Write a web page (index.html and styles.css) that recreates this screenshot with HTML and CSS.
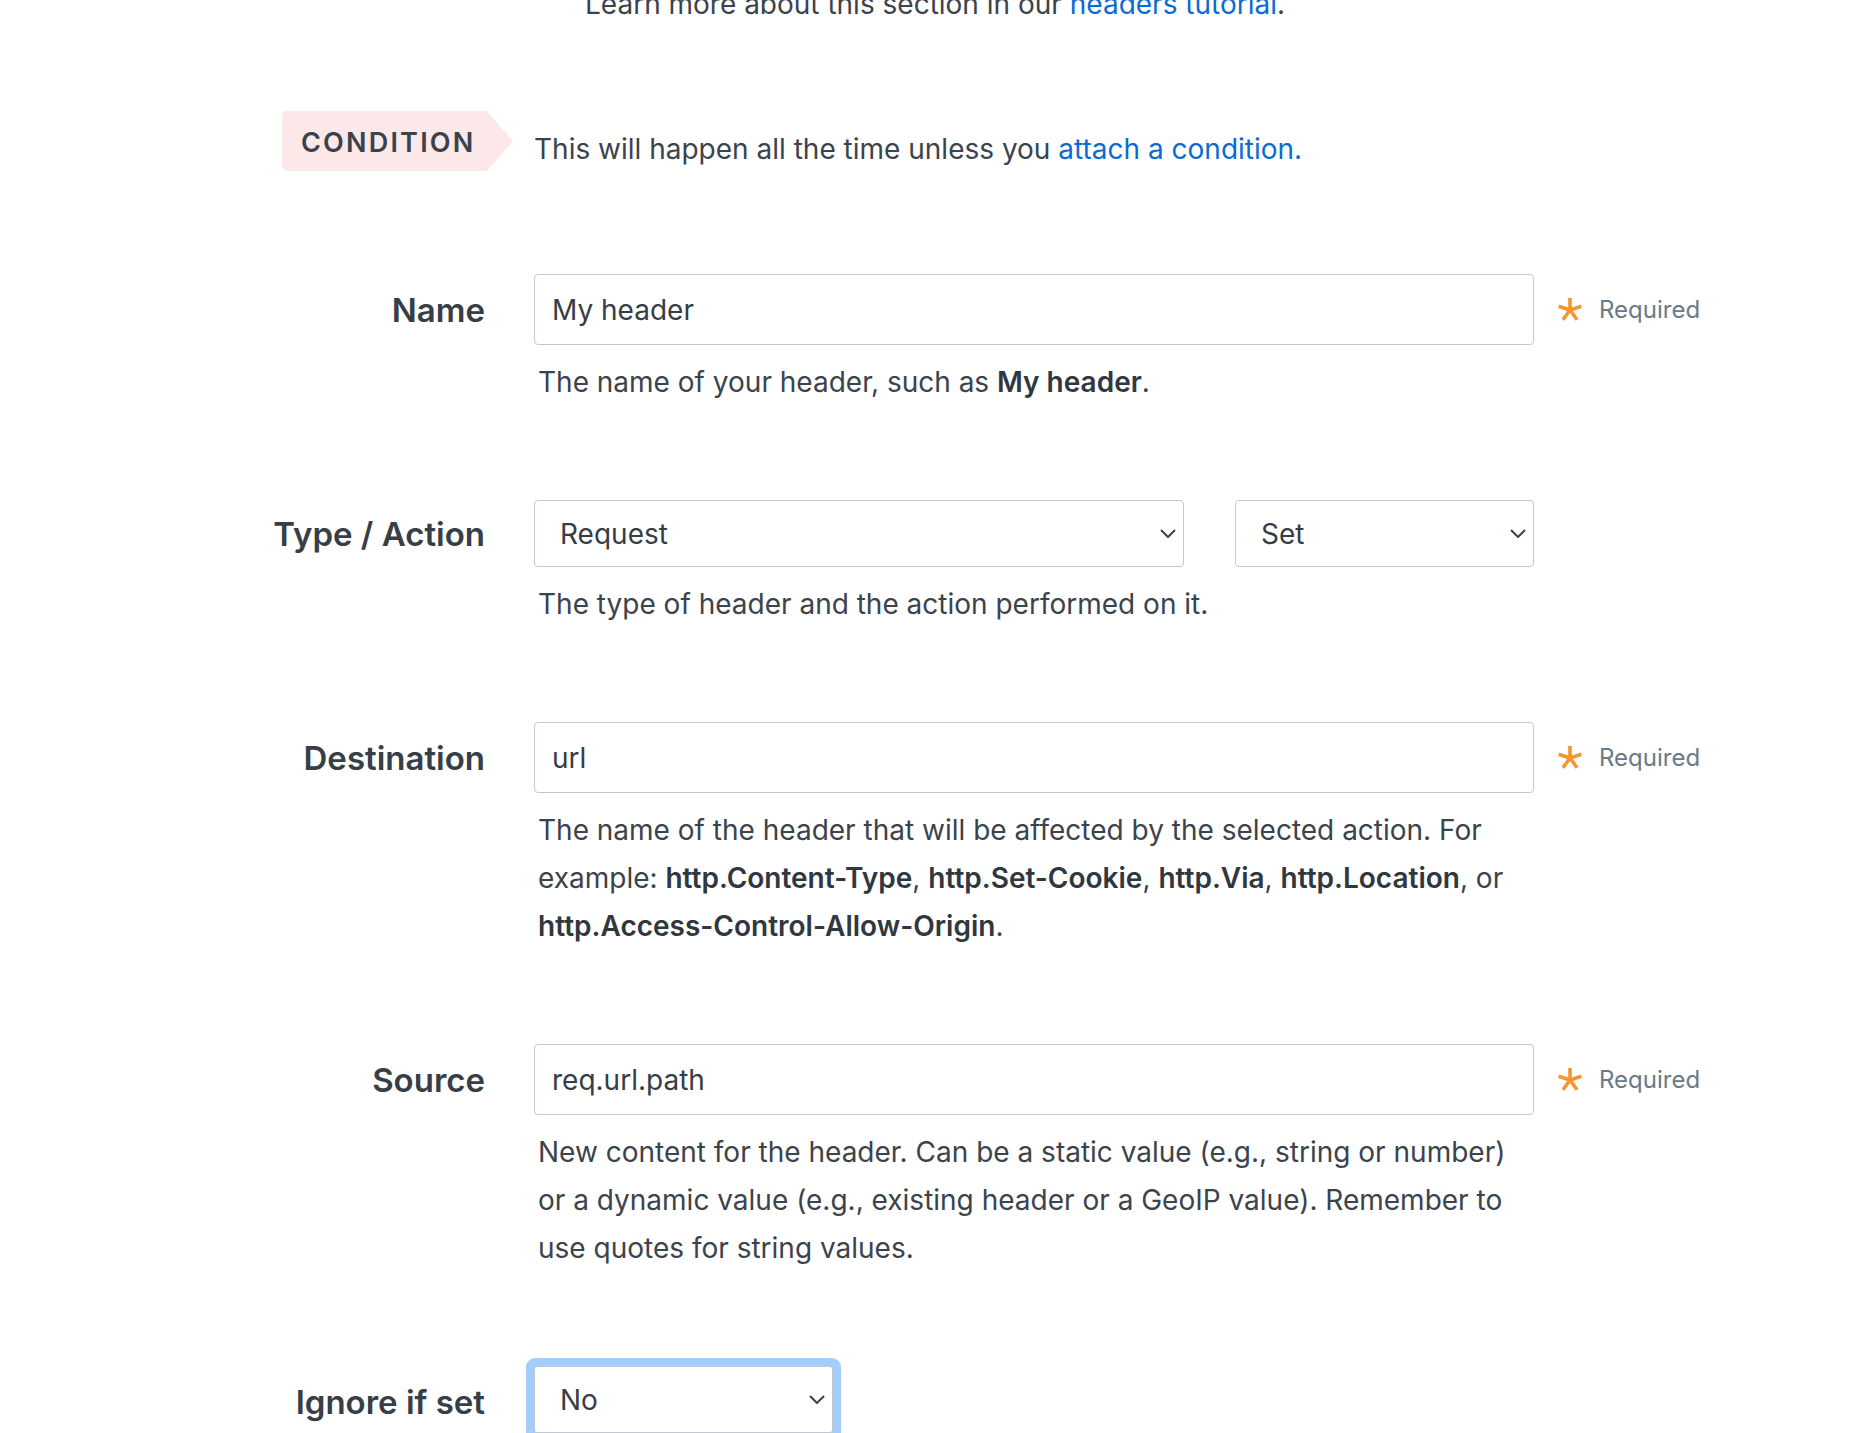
FILE: index.html
```html
<!DOCTYPE html>
<html lang="en">
<head>
<meta charset="utf-8">
<title>Header settings</title>
<link rel="stylesheet" href="styles.css">
</head>
<body>
<main class="form">
  <p class="intro">Learn more about this section in our <a href="#" class="link">headers tutorial</a>.</p>

  <div class="condition-row">
    <span class="badge">CONDITION</span>
    <p class="condition-text">This will happen all the time unless you <a href="#" class="link">attach a condition.</a></p>
  </div>

  <div class="field-row">
    <label class="label" for="name">Name</label>
    <div class="field">
      <input class="input" id="name" type="text" value="My header">
      <p class="help">The name of your header, such as <strong>My header</strong>.</p>
    </div>
    <div class="req">
      <svg class="star" viewBox="0 0 24 24" width="24" height="24" aria-hidden="true">
        <g stroke="#f7952f" stroke-width="3.6" stroke-linecap="butt">
          <line x1="12" y1="13" x2="12" y2="1"/>
          <line x1="12" y1="13" x2="12" y2="1" transform="rotate(72 12 13)"/>
          <line x1="12" y1="13" x2="12" y2="1" transform="rotate(144 12 13)"/>
          <line x1="12" y1="13" x2="12" y2="1" transform="rotate(216 12 13)"/>
          <line x1="12" y1="13" x2="12" y2="1" transform="rotate(288 12 13)"/>
        </g>
      </svg>
      <span class="req-text">Required</span>
    </div>
  </div>

  <div class="field-row">
    <label class="label label-select" for="type">Type / Action</label>
    <div class="field">
      <div class="select-pair">
        <div class="select-wrap select-wide">
          <select class="select" id="type"><option>Request</option></select>
          <svg class="chev" viewBox="0 0 16 9" width="16" height="9" aria-hidden="true"><path d="M1 1l7 7 7-7" fill="none" stroke="#3a424b" stroke-width="2"/></svg>
        </div>
        <div class="select-wrap select-narrow">
          <select class="select" id="action"><option>Set</option></select>
          <svg class="chev" viewBox="0 0 16 9" width="16" height="9" aria-hidden="true"><path d="M1 1l7 7 7-7" fill="none" stroke="#3a424b" stroke-width="2"/></svg>
        </div>
      </div>
      <p class="help">The type of header and the action performed on it.</p>
    </div>
  </div>

  <div class="field-row">
    <label class="label" for="dest">Destination</label>
    <div class="field">
      <input class="input" id="dest" type="text" value="url">
      <p class="help">The name of the header that will be affected by the selected action. For example: <strong>http.Content-Type</strong>, <strong>http.Set-Cookie</strong>, <strong>http.Via</strong>, <strong>http.Location</strong>, or <strong class="nowrap">http.Access-Control-Allow-Origin</strong>.</p>
    </div>
    <div class="req">
      <svg class="star" viewBox="0 0 24 24" width="24" height="24" aria-hidden="true">
        <g stroke="#f7952f" stroke-width="3.6" stroke-linecap="butt">
          <line x1="12" y1="13" x2="12" y2="1"/>
          <line x1="12" y1="13" x2="12" y2="1" transform="rotate(72 12 13)"/>
          <line x1="12" y1="13" x2="12" y2="1" transform="rotate(144 12 13)"/>
          <line x1="12" y1="13" x2="12" y2="1" transform="rotate(216 12 13)"/>
          <line x1="12" y1="13" x2="12" y2="1" transform="rotate(288 12 13)"/>
        </g>
      </svg>
      <span class="req-text">Required</span>
    </div>
  </div>

  <div class="field-row">
    <label class="label" for="source">Source</label>
    <div class="field">
      <input class="input" id="source" type="text" value="req.url.path">
      <p class="help">New content for the header. Can be a static value (e.g., string or number) or a dynamic value (e.g., existing header or a GeoIP value). Remember to use quotes for string values.</p>
    </div>
    <div class="req">
      <svg class="star" viewBox="0 0 24 24" width="24" height="24" aria-hidden="true">
        <g stroke="#f7952f" stroke-width="3.6" stroke-linecap="butt">
          <line x1="12" y1="13" x2="12" y2="1"/>
          <line x1="12" y1="13" x2="12" y2="1" transform="rotate(72 12 13)"/>
          <line x1="12" y1="13" x2="12" y2="1" transform="rotate(144 12 13)"/>
          <line x1="12" y1="13" x2="12" y2="1" transform="rotate(216 12 13)"/>
          <line x1="12" y1="13" x2="12" y2="1" transform="rotate(288 12 13)"/>
        </g>
      </svg>
      <span class="req-text">Required</span>
    </div>
  </div>

  <div class="field-row field-row-last">
    <label class="label label-last" for="ignore">Ignore if set</label>
    <div class="field">
      <div class="select-wrap select-narrow focused">
        <select class="select" id="ignore"><option>No</option></select>
        <svg class="chev" viewBox="0 0 16 9" width="16" height="9" aria-hidden="true"><path d="M1 1l7 7 7-7" fill="none" stroke="#3a424b" stroke-width="2"/></svg>
      </div>
    </div>
  </div>
</main>
</body>
</html>
```

FILE: styles.css
```css
html, body {
  margin: 0;
  padding: 0;
  background: #ffffff;
}

body {
  font-family: Inter, "Noto Sans", "Liberation Sans", sans-serif;
  color: #3b434c;
  font-size: 28px;
  line-height: 48px;
  overflow: hidden;
  height: 1433px;
}

.form {
  display: flex;
  flex-direction: column;
}

.link {
  color: #0b6bd3;
  text-decoration: none;
}

.intro {
  margin: -20px 0 0 585px;
}

.condition-row {
  display: flex;
  align-items: flex-start;
  margin-top: 83px;
  margin-left: 282px;
}

.badge {
  display: block;
  box-sizing: border-box;
  width: 231px;
  height: 60px;
  padding: 4px 0 0 19px;
  line-height: 56px;
  font-size: 27px;
  font-weight: 600;
  letter-spacing: 2.2px;
  color: #3a424b;
  background: #fde8e9;
  border-radius: 5px;
  clip-path: polygon(0 0, 205px 0, 231px 50%, 205px 100%, 0 100%);
}

.condition-text {
  margin: 14px 0 0 21px;
}

.field-row {
  display: flex;
  align-items: flex-start;
  margin-top: 94px;
}

.condition-row + .field-row {
  margin-top: 101px;
}

.field-row-last {
  margin-top: 94px;
}

.label {
  width: 485px;
  height: 71px;
  display: flex;
  align-items: center;
  justify-content: flex-end;
  font-size: 33px;
  font-weight: 600;
  color: #363e47;
  margin-right: 49px;
}

.label-select {
  height: 68px;
}

.label-last {
  height: 72px;
}

.field {
  width: 1000px;
}

.input {
  display: block;
  box-sizing: border-box;
  width: 1000px;
  height: 71px;
  margin: 0;
  padding: 0 0 0 17px;
  font: inherit;
  color: #353d46;
  border: 1.5px solid #bfc9d2;
  border-radius: 4px;
  background: #fff;
  outline: none;
}

.help {
  margin: 13px 0 0 0;
  padding-left: 4px;
  color: #3b434c;
}

.help strong {
  font-weight: 600;
  color: #30373f;
}

.nowrap {
  white-space: nowrap;
}

.req {
  display: flex;
  align-items: center;
  height: 71px;
  margin-left: 24px;
}

.star {
  display: block;
  margin-top: -2px;
}

.req-text {
  margin-left: 17px;
  font-size: 24px;
  color: #6a7988;
}

.select-pair {
  display: flex;
  gap: 51px;
}

.select-wrap {
  position: relative;
  height: 67px;
}

.select-wide {
  width: 650px;
}

.select-narrow {
  width: 299px;
}

.select {
  appearance: none;
  -webkit-appearance: none;
  display: block;
  box-sizing: border-box;
  width: 100%;
  height: 67px;
  margin: 0;
  padding: 0 0 0 25px;
  font: inherit;
  color: #353d46;
  border: 1.5px solid #bfc9d2;
  border-radius: 4px;
  background: #fff;
  outline: none;
}

.chev {
  position: absolute;
  right: 8px;
  top: 29px;
  pointer-events: none;
}

.focused .select {
  box-shadow: 0 0 0 8px #a3cefc;
  border-radius: 3px;
}
```
